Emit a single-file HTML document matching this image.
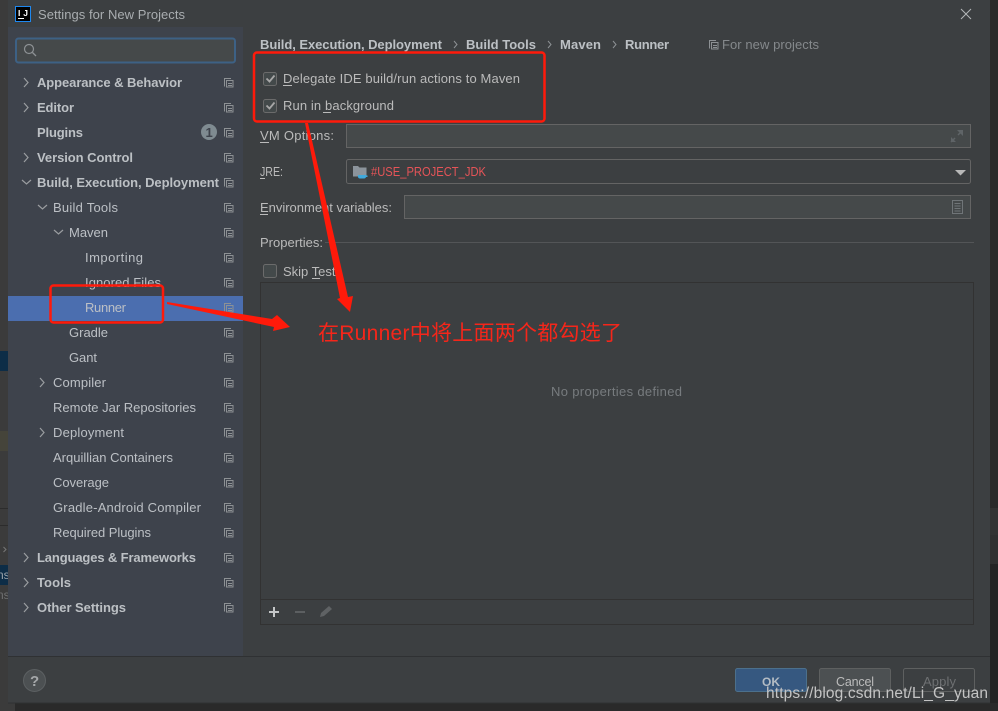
<!DOCTYPE html>
<html><head><meta charset="utf-8"><title>Settings for New Projects</title>
<style>
html,body{margin:0;padding:0;background:#3c3f41;width:998px;height:711px;overflow:hidden}
svg{display:block}
text{font-family:"Liberation Sans","Noto Sans CJK SC",sans-serif;font-size:13px;fill:#bbbbbb}
.b{font-weight:bold;fill:#bcc0c4}
.s{fill:#bcc0c5}
</style></head><body>
<svg width="998" height="711" viewBox="0 0 998 711" xmlns="http://www.w3.org/2000/svg">
<defs>
<g id="c" fill="none" stroke="#8d9194" stroke-width="1"><path d="M224.500 86.500V78.500H231"/><rect x="226.500" y="80.500" width="6.500" height="6.500"/><path d="M228 83.500H232M228 85.500H232"/></g>
<path id="r" d="M0 0l4 4.500l-4 4.500" fill="none" stroke="#9a9da0" stroke-width="1.200"/>
<path id="d" d="M0 0l4.500 4l4.500-4" fill="none" stroke="#9a9da0" stroke-width="1.200"/>
</defs>
<rect width="998" height="711" fill="#3c3f41"/>
<!-- background window strips -->
<rect x="0" y="0" width="8" height="711" fill="#3b3b3b"/>
<rect x="0" y="351" width="8" height="20" fill="#0d2d47"/>
<rect x="0" y="431" width="8" height="20" fill="#45443a"/>
<rect x="0" y="508" width="8" height="1" fill="#2c2c2c"/>
<rect x="0" y="525" width="8" height="1" fill="#2c2c2c"/>
<rect x="0" y="565" width="8" height="20" fill="#0d2d47"/>
<path d="M3.500 547l2.500 2.500l-2.500 2.500" fill="none" stroke="#777" stroke-width="1"/>
<text x="-3" y="579" style="font-size:12px;fill:#9aa3aa">ns</text>
<text x="-3" y="599" style="font-size:12px;fill:#6f7071">ns</text>
<rect x="8" y="0" width="1" height="711" fill="#3c3f41"/>
<rect x="990" y="0" width="8" height="711" fill="#2a2a2a"/>
<rect x="990" y="508" width="8" height="27" fill="#333333"/>
<rect x="990" y="535" width="8" height="29" fill="#303030"/>
<rect x="990" y="564" width="8" height="147" fill="#242424"/>
<rect x="0" y="703" width="998" height="8" fill="#2a2a2a"/>
<rect x="0" y="703" width="15" height="8" fill="#3b3b3b"/>
<!-- sidebar -->
<rect x="8" y="27" width="235" height="629" fill="#3e434c"/>
<rect x="8" y="296" width="235" height="25" fill="#4b6eaf"/>
<rect x="8" y="656" width="982" height="1" fill="#2f3133"/>
<rect x="8" y="702.500" width="982" height="1" fill="#2f3133"/>
<!-- title -->
<rect x="15.500" y="6.500" width="15" height="15" fill="#000" stroke="#1e88f0"/>
<text x="18" y="16" style="font-size:8.500px;font-weight:bold;fill:#fff" textLength="10" lengthAdjust="spacing">IJ</text>
<rect x="18" y="18" width="6" height="1" fill="#fff"/>
<text x="38" y="19" style="fill:#a9adb0" textLength="147" lengthAdjust="spacing">Settings for New Projects</text>
<path d="M961 9l10 10M971 9l-10 10" stroke="#b4b7b9" stroke-width="1" fill="none"/>
<!-- search -->
<rect x="16" y="38.500" width="219" height="24" rx="2.500" fill="#45494a" stroke="#3d6185" stroke-width="2"/>
<circle cx="29" cy="49" r="4.500" fill="none" stroke="#8d9194" stroke-width="1.200"/>
<path d="M32.500 52.500l3.500 3.500" stroke="#8d9194" stroke-width="1.300"/>
<!-- tree labels -->
<text class="b" x="37" y="87" textLength="145" lengthAdjust="spacing">Appearance &amp; Behavior</text>
<text class="b" x="37" y="112" textLength="37" lengthAdjust="spacing">Editor</text>
<text class="b" x="37" y="137" textLength="46" lengthAdjust="spacing">Plugins</text>
<text class="b" x="37" y="162" textLength="96" lengthAdjust="spacing">Version Control</text>
<text class="b" x="37" y="187" textLength="182" lengthAdjust="spacing">Build, Execution, Deployment</text>
<text class="s" x="53" y="212" textLength="65" lengthAdjust="spacing">Build Tools</text>
<text class="s" x="69" y="237" textLength="39" lengthAdjust="spacing">Maven</text>
<text class="s" x="85" y="262" textLength="58" lengthAdjust="spacing">Importing</text>
<text class="s" x="85" y="287" textLength="76" lengthAdjust="spacing">Ignored Files</text>
<text class="s" x="85" y="312" textLength="41" lengthAdjust="spacing">Runner</text>
<text class="s" x="69" y="337" textLength="39" lengthAdjust="spacing">Gradle</text>
<text class="s" x="69" y="362" textLength="28" lengthAdjust="spacing">Gant</text>
<text class="s" x="53" y="387" textLength="53" lengthAdjust="spacing">Compiler</text>
<text class="s" x="53" y="412" textLength="143" lengthAdjust="spacing">Remote Jar Repositories</text>
<text class="s" x="53" y="437" textLength="71" lengthAdjust="spacing">Deployment</text>
<text class="s" x="53" y="462" textLength="120" lengthAdjust="spacing">Arquillian Containers</text>
<text class="s" x="53" y="487" textLength="56" lengthAdjust="spacing">Coverage</text>
<text class="s" x="53" y="512" textLength="148" lengthAdjust="spacing">Gradle-Android Compiler</text>
<text class="s" x="53" y="537" textLength="98" lengthAdjust="spacing">Required Plugins</text>
<text class="b" x="37" y="562" textLength="159" lengthAdjust="spacing">Languages &amp; Frameworks</text>
<text class="b" x="37" y="587" textLength="34" lengthAdjust="spacing">Tools</text>
<text class="b" x="37" y="612" textLength="89" lengthAdjust="spacing">Other Settings</text>
<!-- chevrons -->
<use href="#r" x="24" y="78"/><use href="#r" x="24" y="103"/><use href="#r" x="24" y="153"/>
<use href="#d" x="22" y="180"/><use href="#d" x="38" y="205"/><use href="#d" x="54" y="230"/>
<use href="#r" x="40" y="378"/><use href="#r" x="40" y="428"/>
<use href="#r" x="24" y="553"/><use href="#r" x="24" y="578"/><use href="#r" x="24" y="603"/>
<!-- badge -->
<circle cx="209" cy="132" r="8" fill="#7f8b91"/>
<text x="205.500" y="137" style="fill:#3e434c;font-weight:bold">1</text>
<!-- copy icons -->
<use href="#c"/><use href="#c" y="25"/><use href="#c" y="50"/><use href="#c" y="75"/><use href="#c" y="100"/>
<use href="#c" y="125"/><use href="#c" y="150"/><use href="#c" y="175"/><use href="#c" y="200"/><use href="#c" y="225"/>
<use href="#c" y="250"/><use href="#c" y="275"/><use href="#c" y="300"/><use href="#c" y="325"/><use href="#c" y="350"/>
<use href="#c" y="375"/><use href="#c" y="400"/><use href="#c" y="425"/><use href="#c" y="450"/><use href="#c" y="475"/>
<use href="#c" y="500"/><use href="#c" y="525"/>
<!-- breadcrumb -->
<text class="b" x="260" y="49" textLength="182" lengthAdjust="spacing">Build, Execution, Deployment</text>
<path d="M454 41l3 3.500l-3 3.500M548 41l3 3.500l-3 3.500M613 41l3 3.500l-3 3.500" fill="none" stroke="#8d9194"/>
<text class="b" x="466" y="49" textLength="70" lengthAdjust="spacing">Build Tools</text>
<text class="b" x="560" y="49" textLength="41" lengthAdjust="spacing">Maven</text>
<text class="b" x="625" y="49" textLength="44" lengthAdjust="spacing">Runner</text>
<g transform="translate(485,-38)"><use href="#c"/></g>
<text x="722" y="49" style="fill:#85898c" textLength="97" lengthAdjust="spacing">For new projects</text>
<!-- checkboxes -->
<rect x="263.500" y="72.500" width="13" height="13" rx="2" fill="#43494a" stroke="#6b6b6b"/>
<path d="M266.500 78.500l3 3l5-6" fill="none" stroke="#a7a7a7" stroke-width="1.800"/>
<text x="283" y="83" textLength="237" lengthAdjust="spacing">Delegate IDE build/run actions to Maven</text>
<rect x="283" y="85" width="9" height="1" fill="#bbb"/>
<rect x="263.500" y="99.500" width="13" height="13" rx="2" fill="#43494a" stroke="#6b6b6b"/>
<path d="M266.500 105.500l3 3l5-6" fill="none" stroke="#a7a7a7" stroke-width="1.800"/>
<text x="283" y="110" textLength="111" lengthAdjust="spacing">Run in background</text>
<rect x="323" y="112" width="8" height="1" fill="#bbb"/>
<!-- fields -->
<text x="260" y="140" textLength="74" lengthAdjust="spacing">VM Options:</text>
<rect x="260" y="142" width="9" height="1" fill="#bbb"/>
<rect x="346.500" y="124.500" width="624" height="23" fill="#45494a" stroke="#646464"/>
<path d="M951 142l4-4M962 131l-4 4" stroke="#5f6467" stroke-width="1.500"/>
<path d="M951 137v5h5zM963 136v-6h-6z" fill="#5f6467"/>
<text x="260" y="176" textLength="23" lengthAdjust="spacingAndGlyphs">JRE:</text>
<rect x="260" y="178" width="5" height="1" fill="#bbb"/>
<rect x="346.500" y="159.500" width="624" height="24" rx="2" fill="#3c3f41" stroke="#646464"/>
<path d="M353 166h5l1.500 1.500h7v9h-13.500z" fill="#8c949c"/>
<path d="M358 175h8v1.500a2 2 0 0 1-2 2h-4a2 2 0 0 1-2-2zM366 175.500h1.500v1.500h-1.500z" fill="#3fa9dc"/>
<text x="371" y="176" style="fill:#e55458" textLength="115" lengthAdjust="spacingAndGlyphs">#USE_PROJECT_JDK</text>
<path d="M955 170h11l-5.500 5.500z" fill="#b8b8b8"/>
<text x="260" y="212" textLength="132" lengthAdjust="spacing">Environment variables:</text>
<rect x="260" y="214" width="8" height="1" fill="#bbb"/>
<rect x="404.500" y="195.500" width="566" height="23" fill="#45494a" stroke="#646464"/>
<rect x="952.500" y="200.500" width="10" height="13" fill="none" stroke="#707578"/>
<path d="M954.500 203.500h6M954.500 206h6M954.500 208.500h6M954.500 211h6" stroke="#707578"/>
<text x="260" y="247" textLength="63" lengthAdjust="spacing">Properties:</text>
<rect x="325" y="242" width="649" height="1" fill="#535557"/>
<rect x="263.500" y="264.500" width="13" height="13" rx="2" fill="#43494a" stroke="#6b6b6b"/>
<text x="283" y="276" textLength="59" lengthAdjust="spacing">Skip Tests</text>
<rect x="312" y="278" width="8" height="1" fill="#bbb"/>
<!-- panel -->
<rect x="260.500" y="282.500" width="713" height="342" fill="none" stroke="#323232"/>
<rect x="261" y="599" width="712" height="1" fill="#323232"/>
<text x="551" y="396" style="fill:#777b7e" textLength="131" lengthAdjust="spacing">No properties defined</text>
<path d="M269 612h10M274 607v10" stroke="#c4c6c7" stroke-width="2"/>
<path d="M295 612h10" stroke="#5c5f61" stroke-width="2"/>
<path d="M320 617l1-4l8-7l3 3l-8 7z" fill="#5f6264"/>
<!-- footer -->
<circle cx="34.500" cy="680.500" r="11" fill="#4c5052" stroke="#5c6062"/>
<text x="30" y="686" style="font-size:15px;font-weight:bold;fill:#a5a8aa">?</text>
<rect x="735.500" y="668.500" width="71" height="23" rx="2" fill="#365880" stroke="#4c708c"/>
<text x="762" y="686" style="font-size:12px;font-weight:bold;fill:#b4bcc4" textLength="18" lengthAdjust="spacing">OK</text>
<rect x="819.500" y="668.500" width="71" height="23" rx="2" fill="#4c5052" stroke="#5e6060"/>
<text x="836" y="686" style="font-size:12.500px" textLength="38" lengthAdjust="spacing">Cancel</text>
<rect x="903.500" y="668.500" width="71" height="23" rx="2" fill="#3c3f41" stroke="#5e6060"/>
<text x="923" y="686" style="fill:#6e7072" textLength="33" lengthAdjust="spacing">Apply</text>
<!-- annotations -->
<rect x="254" y="52.500" width="290.500" height="69" rx="3" fill="none" stroke="#ff1a0a" stroke-width="2.500"/>
<rect x="50.500" y="285.500" width="112.500" height="37" rx="3" fill="none" stroke="#ff1a0a" stroke-width="2.500"/>
<path d="M305 123L308 123L348 297L353 296L350 312L337 299L340 298Z" fill="#ff1a0a"/>
<path d="M167 302L272 319L277 315L290 327L273 331L274 327L167 304Z" fill="#ff1a0a"/>
<text x="318" y="340" style="font-size:21px;fill:#f5261a" textLength="304" lengthAdjust="spacing">在Runner中将上面两个都勾选了</text>
<text x="766" y="698" style="font-size:15.500px;fill:#c4c4c4" textLength="222" lengthAdjust="spacing">https://blog.csdn.net/Li_G_yuan</text>
</svg>
</body></html>
